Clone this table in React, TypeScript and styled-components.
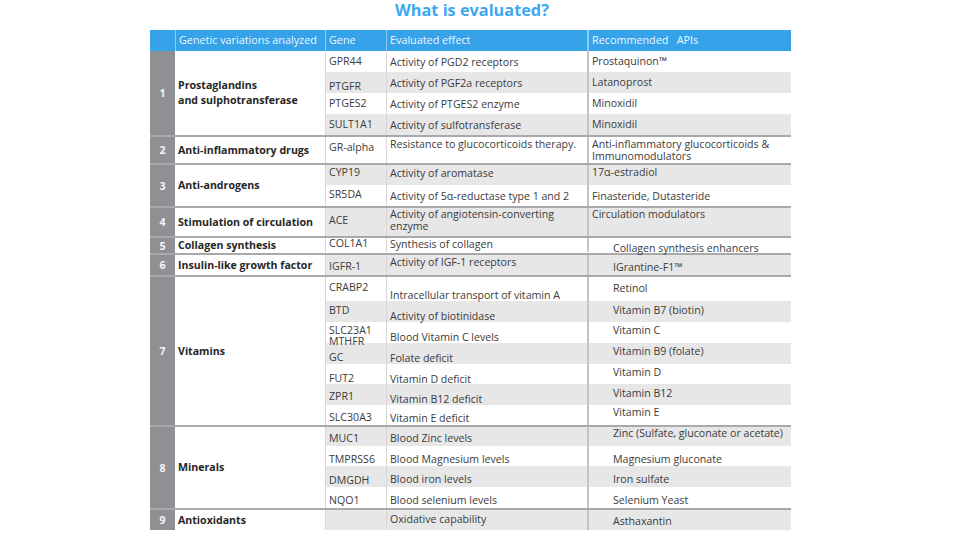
import React from "react";
import styled, { createGlobalStyle } from "styled-components";

const GlobalStyle = createGlobalStyle`
    body {
        margin: 0;
        background: #ffffff;
        font-family: "Open Sans", "DejaVu Sans", sans-serif;
    }
`;

type Row = {
    gene: string;
    effect: string;
    api: string;
    h: number;
    p: [number, number, number];
};

type Group = {
    n: number;
    name: string;
    indent?: boolean;
    rows: Row[];
};

const groups: Group[] = [
    {
        n: 1,
        name: "Prostaglandins\nand sulphotransferase",
        rows: [
            { gene: "GPR44", effect: "Activity of PGD2 receptors", api: "Prostaquinon™", h: 21, p: [5, 5, 4] },
            { gene: "PTGFR", effect: "Activity of PGF2a receptors", api: "Latanoprost", h: 21, p: [9, 5, 4] },
            { gene: "PTGES2", effect: "Activity of PTGES2 enzyme", api: "Minoxidil", h: 21, p: [5, 5, 4] },
            { gene: "SULT1A1", effect: "Activity of sulfotransferase", api: "Minoxidil", h: 21, p: [5, 5, 4] }
        ]
    },
    {
        n: 2,
        name: "Anti-inflammatory drugs",
        rows: [
            {
                gene: "GR-alpha",
                effect: "Resistance to glucocorticoids therapy.",
                api: "Anti-inflammatory glucocorticoids &\nImmunomodulators",
                h: 26,
                p: [5, 1, 1]
            }
        ]
    },
    {
        n: 3,
        name: "Anti-androgens",
        rows: [
            { gene: "CYP19", effect: "Activity of aromatase", api: "17α-estradiol", h: 20, p: [2, 2, 1] },
            { gene: "SR5DA", effect: "Activity of 5α-reductase type 1 and 2", api: "Finasteride, Dutasteride", h: 21, p: [4, 5, 5] }
        ]
    },
    {
        n: 4,
        name: "Stimulation of circulation",
        rows: [
            {
                gene: "ACE",
                effect: "Activity of angiotensin-converting\nenzyme",
                api: "Circulation modulators",
                h: 28,
                p: [7, 0, 0]
            }
        ]
    },
    {
        n: 5,
        name: "Collagen synthesis",
        indent: true,
        rows: [
            { gene: "COL1A1", effect: "Synthesis of collagen", api: "Collagen synthesis enhancers", h: 14, p: [0, 0, 4] }
        ]
    },
    {
        n: 6,
        name: "Insulin-like growth factor",
        indent: true,
        rows: [
            { gene: "IGFR-1", effect: "Activity of IGF-1 receptors", api: "IGrantine-F1™", h: 20, p: [6, 1, 6] }
        ]
    },
    {
        n: 7,
        name: "Vitamins",
        indent: true,
        rows: [
            { gene: "CRABP2", effect: "Intracellular transport of vitamin A", api: "Retinol", h: 24, p: [5, 12, 5] },
            { gene: "BTD", effect: "Activity of biotinidase", api: "Vitamin B7 (biotin)", h: 21, p: [4, 9, 3] },
            { gene: "SLC23A1\nMTHFR", effect: "Blood Vitamin C levels", api: "Vitamin C", h: 21, p: [3, 9, 2] },
            { gene: "GC", effect: "Folate deficit", api: "Vitamin B9 (folate)", h: 21, p: [9, 9, 2] },
            { gene: "FUT2", effect: "Vitamin D deficit", api: "Vitamin D", h: 20, p: [9, 9, 2] },
            { gene: "ZPR1", effect: "Vitamin B12 deficit", api: "Vitamin B12", h: 21, p: [7, 9, 3] },
            { gene: "SLC30A3", effect: "Vitamin E deficit", api: "Vitamin E", h: 20, p: [7, 7, 1] }
        ]
    },
    {
        n: 8,
        name: "Minerals",
        indent: true,
        rows: [
            { gene: "MUC1", effect: "Blood Zinc levels", api: "Zinc (Sulfate, gluconate or acetate)", h: 19, p: [6, 5, 0] },
            { gene: "TMPRSS6", effect: "Blood Magnesium levels", api: "Magnesium gluconate", h: 20, p: [8, 7, 7] },
            { gene: "DMGDH", effect: "Blood iron levels", api: "Iron sulfate", h: 21, p: [9, 7, 7] },
            { gene: "NQO1", effect: "Blood selenium levels", api: "Selenium Yeast", h: 21, p: [8, 7, 7] }
        ]
    },
    {
        n: 9,
        name: "Antioxidants",
        indent: true,
        rows: [
            { gene: "", effect: "Oxidative capability", api: "Asthaxantin", h: 20, p: [3, 3, 5] }
        ]
    }
];

function App() {
    let stripe = 0;
    return (
        <Page>
            <GlobalStyle />
            <Title>What is evaluated?</Title>
            <Table>
                <HeaderRow>
                    <HeadCell $w={25} />
                    <HeadCell $w={150}>Genetic variations analyzed</HeadCell>
                    <HeadCell $w={61}>Gene</HeadCell>
                    <HeadCell $w={201}>Evaluated effect</HeadCell>
                    <HeadCell $w={204} $thick>Recommended   APIs</HeadCell>
                </HeaderRow>
                {groups.map((group, gi) => (
                    <GroupRow key={group.n} $last={gi === groups.length - 1}>
                        <NumCell>{group.n}</NumCell>
                        <NameCell>{group.name}</NameCell>
                        <SubRows>
                            {group.rows.map((row, ri) => {
                                const shaded = stripe++ % 2 === 1;
                                return (
                                    <SubRow key={ri} $h={row.h} $shaded={shaded}>
                                        <Cell $w={61} $pt={row.p[0]} $tight>{row.gene}</Cell>
                                        <Cell $w={201} $pt={row.p[1]}>{row.effect}</Cell>
                                        <Cell $w={204} $pt={row.p[2]} $thick $indent={group.indent}>
                                            {row.api}
                                        </Cell>
                                    </SubRow>
                                );
                            })}
                        </SubRows>
                    </GroupRow>
                ))}
            </Table>
        </Page>
    );
}

export default App;

const Page = styled.div`
    width: 641px;
    margin-left: 150px;
`;

const Title = styled.h1`
    margin: 0;
    height: 30px;
    padding-left: 3px;
    font-size: 16.3px;
    line-height: 20px;
    font-weight: 700;
    color: #3ea8ee;
    text-align: center;
`;

const Table = styled.div`
    display: flex;
    flex-direction: column;
    color: #3b3b3b;
    font-size: 10.6px;
`;

const HeaderRow = styled.div`
    display: flex;
    height: 21px;
    background: #35a2ea;
    color: #eef7fd;
`;

const HeadCell = styled.div<{ $w: number; $thick?: boolean }>`
    width: ${(p) => p.$w}px;
    box-sizing: border-box;
    padding: 4px 0 0 3px;
    font-size: 10.8px;
    line-height: 12px;
    white-space: pre;
    border-left: ${(p) => (p.$thick ? "2px" : "1px")} solid #8fcbf3;

    &:first-child {
        border-left: none;
    }
`;

const GroupRow = styled.div<{ $last?: boolean }>`
    display: flex;
    border-bottom: ${(p) => (p.$last ? "none" : "2px solid #a9a9ab")};
`;

const NumCell = styled.div`
    width: 25px;
    flex-shrink: 0;
    display: flex;
    align-items: center;
    justify-content: center;
    background: #8f9094;
    color: #f4f4f4;
    font-weight: 700;
`;

const NameCell = styled.div`
    width: 150px;
    flex-shrink: 0;
    box-sizing: border-box;
    display: flex;
    align-items: center;
    padding-left: 3px;
    font-weight: 700;
    line-height: 15px;
    color: #262626;
    white-space: pre;
`;

const SubRows = styled.div`
    display: flex;
    flex-direction: column;
`;

const SubRow = styled.div<{ $h: number; $shaded: boolean }>`
    display: flex;
    height: ${(p) => p.$h}px;
    background: ${(p) => (p.$shaded ? "#e7e7e8" : "#ffffff")};
`;

/* positioned so text that runs past its row stays above the next row's shading */
const Cell = styled.div<{ $w: number; $pt: number; $thick?: boolean; $indent?: boolean; $tight?: boolean }>`
    position: relative;
    width: ${(p) => p.$w}px;
    box-sizing: border-box;
    padding: ${(p) => p.$pt}px 0 0 ${(p) => (p.$indent ? 24 : 3)}px;
    line-height: ${(p) => (p.$tight ? 11 : 12)}px;
    white-space: pre;
    border-left: ${(p) => (p.$thick ? "2px solid #c4c4c6" : "1px solid #d6d6d8")};
`;
